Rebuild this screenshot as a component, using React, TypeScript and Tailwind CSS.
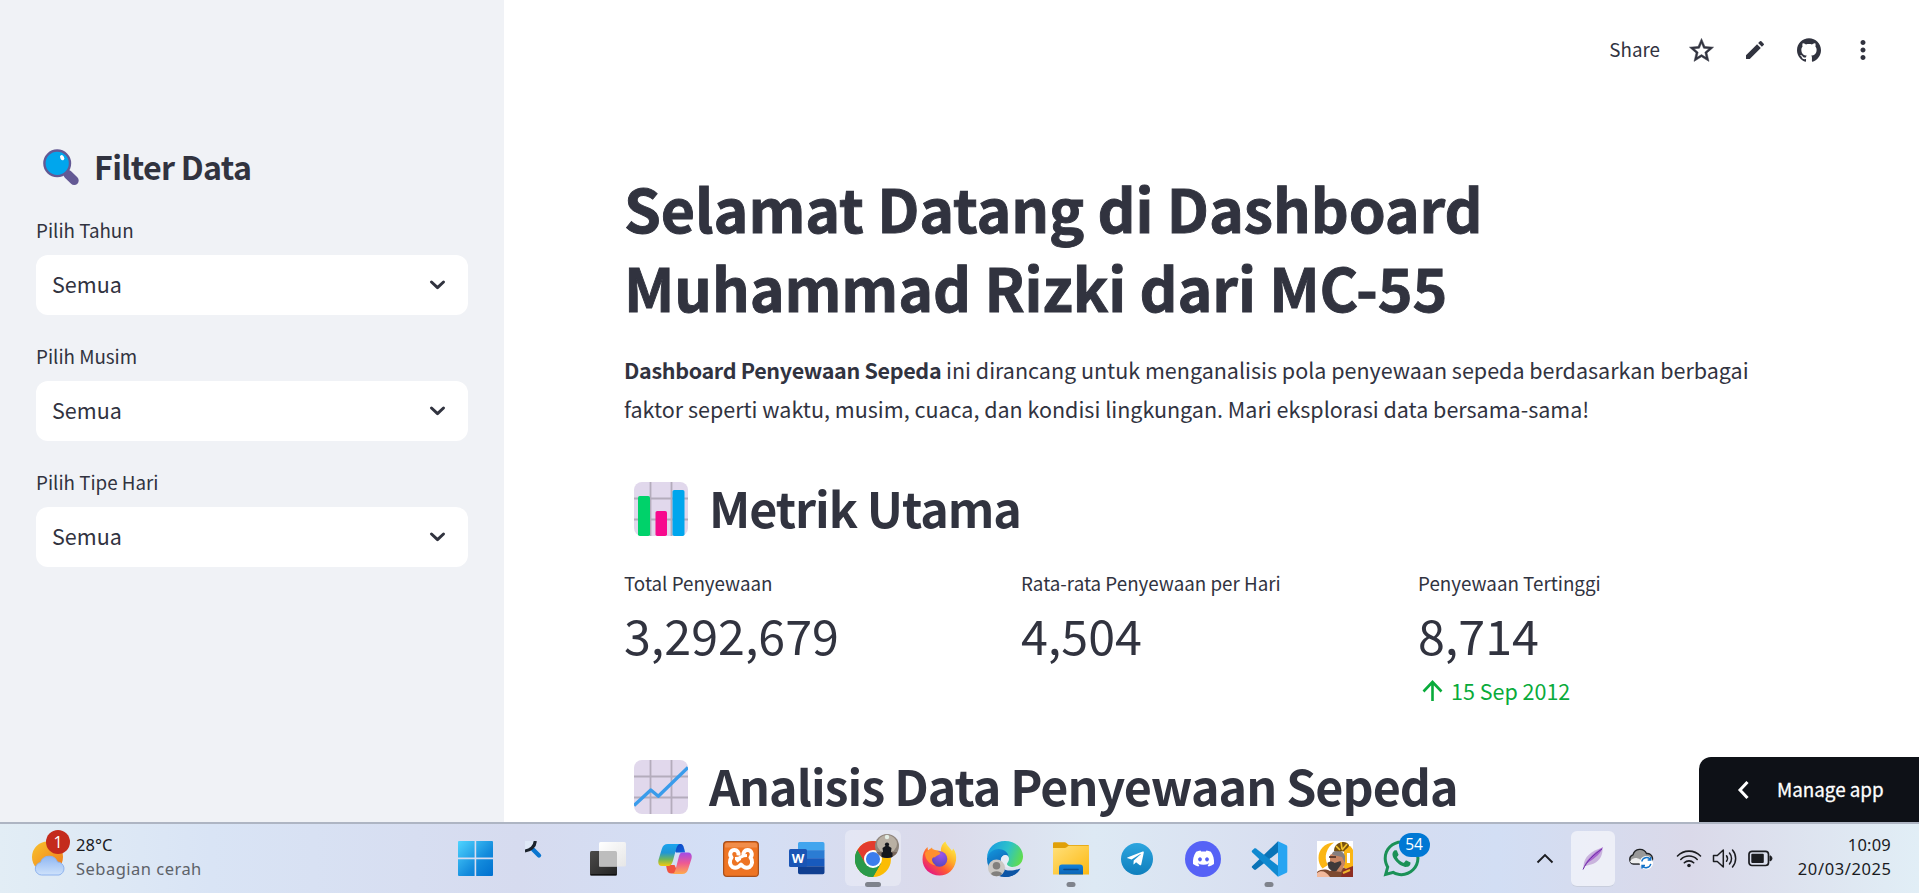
import React from "react";
import { MdStarOutline, MdEdit, MdMoreVert } from "react-icons/md";
import { SiGithub } from "react-icons/si";
import { FaDiscord, FaTelegramPlane, FaWhatsapp } from "react-icons/fa";

const SearchEmoji = () => (
  <svg width="36" height="37" viewBox="0 0 36 37">
    <path d="M25 25.500L31.200 31.500" stroke="#635994" strokeWidth="9" strokeLinecap="round" />
    <path d="M22 22l4 4" stroke="#635994" strokeWidth="3" />
    <circle cx="14.200" cy="14.300" r="12.800" fill="#00a6ed" stroke="#635994" strokeWidth="2.400" />
    <ellipse cx="19.200" cy="8.700" rx="1.900" ry="2.700" transform="rotate(-30 19.200 8.700)" fill="#fff" />
  </svg>
);

const Grid = () => (
  <>
    <rect width="54" height="54" rx="8" fill="#e1d8ec" />
    <path d="M16.500 0v54M37.500 0v54M0 16.500h54M0 37.500h54" stroke="#b4acbc" strokeWidth="1.800" />
  </>
);

const BarsEmoji = () => (
  <svg width="54" height="54" viewBox="0 0 54 54">
    <Grid />
    <rect x="4" y="14" width="12" height="40" rx="1.800" fill="#00d26a" />
    <rect x="21.500" y="29" width="11.500" height="25" rx="1.800" fill="#f70a8d" />
    <rect x="38.500" y="8" width="12" height="46" rx="1.800" fill="#00a6ed" />
  </svg>
);

const LineEmoji = () => (
  <svg width="54" height="54" viewBox="0 0 54 54">
    <Grid />
    <path d="M0 45.500L16.800 30l7.500 6.200L54 7.500" fill="none" stroke="#3a9ceb" strokeWidth="3.400" strokeLinejoin="round" />
  </svg>
);

const Select = ({ label }: { label: string }) => (
  <div>
    <div className="h-[32px] text-[18.8px] leading-[32px]">{label}</div>
    <div className="mt-[9px] flex h-[60px] items-center justify-between rounded-[12px] bg-white pr-[22.5px] pl-[16px]">
      <span className="pb-[3px] text-[21.5px] leading-[38px]">Semua</span>
      <svg width="17" height="12" viewBox="0 0 17 12">
        <path d="M2.500 3l6 5.600 6-5.600" fill="none" stroke="#31333f" strokeWidth="3" strokeLinecap="round" strokeLinejoin="round" />
      </svg>
    </div>
  </div>
);

const Metric = ({ label, value, delta }: { label: string; value: string; delta?: string }) => (
  <div className="w-[397px] whitespace-nowrap">
    <div className="h-[32px] text-[18.8px] leading-[32px]">{label}</div>
    <div className="h-[72px] text-[48.4px] leading-[70px]">{value}</div>
    <div className="mt-[1px] flex h-[38px] items-center text-[21.5px] leading-[38px] text-[#09ab3b]">
      {delta && (
        <>
          <svg width="28" height="28" viewBox="0 0 28 28" className="mr-[5px]">
            <path d="M14.500 24V5M5.500 14.500l9-9.500 9 9.500" fill="none" stroke="#09ab3b" strokeWidth="2.600" />
          </svg>
          {delta}
        </>
      )}
    </div>
  </div>
);

const WindowsIcon = () => (
  <svg width="35" height="35" viewBox="0 0 35 35">
    <defs>
      <linearGradient id="win" x1="0" y1="0" x2="35" y2="35" gradientUnits="userSpaceOnUse">
        <stop stopColor="#4fd4ff" /><stop offset=".6" stopColor="#138bdc" /><stop offset="1" stopColor="#0070cf" />
      </linearGradient>
    </defs>
    <path fill="url(#win)" d="M1 0h15.600v16.600H0V1a1 1 0 011-1zM18.200 0H34a1 1 0 011 1v15.600H18.200zM0 18.200h16.600V35H1a1 1 0 01-1-1zM18.200 18.200H35V34a1 1 0 01-1 1H18.200z" />
  </svg>
);

const SearchIcon = () => (
  <svg width="35" height="35" viewBox="0 0 35 35">
    <path d="M0 0h10.500C10 5 5 9 0 10z" fill="#dfe8f7" />
    <path d="M8 8.500l6 6" stroke="#0a76d0" strokeWidth="4.400" strokeLinecap="round" />
    <path d="M10.300 0C9.800 5.500 5.500 9.500 0 10" fill="none" stroke="#1b222b" strokeWidth="3.200" />
  </svg>
);

const TaskViewIcon = () => (
  <svg width="36" height="35" viewBox="0 0 36 35">
    <defs>
      <linearGradient id="tvd" x1="0" y1="0" x2="1" y2="1"><stop stopColor="#4c4b4a" /><stop offset="1" stopColor="#232323" /></linearGradient>
      <linearGradient id="tvl" x1="0" y1="0" x2="1" y2="1"><stop stopColor="#fff" /><stop offset="1" stopColor="#e6e6e6" /></linearGradient>
    </defs>
    <rect x="0" y="10" width="27" height="24.500" rx="1.500" fill="url(#tvd)" />
    <path d="M.5 33.800h26" stroke="#0b0b0b" strokeWidth="1.200" />
    <rect x="9" y="1" width="27" height="24.500" rx="1.500" fill="url(#tvl)" />
    <path d="M9 10h16.500a1.500 1.500 0 011.500 1.500v14H9z" fill="#bdbdbd" />
  </svg>
);

const CopilotIcon = () => (
  <svg width="34" height="32" viewBox="0 0 34 32">
    <defs>
      <linearGradient id="cp1" x1="0" y1="0" x2="0" y2="1"><stop stopColor="#1aa3ee" /><stop offset=".4" stopColor="#1f96d6" /><stop offset=".7" stopColor="#6fb65a" /><stop offset="1" stopColor="#f5c90c" /></linearGradient>
      <linearGradient id="cp2" x1="0" y1="0" x2="0" y2="1"><stop stopColor="#a24be8" /><stop offset=".5" stopColor="#ee5a92" /><stop offset="1" stopColor="#ffab4c" /></linearGradient>
      <linearGradient id="cp3" x1="0" y1="0" x2="1" y2="1"><stop stopColor="#0c3fbd" /><stop offset="1" stopColor="#1263dd" /></linearGradient>
    </defs>
    <path d="M17 1h5c3 0 3.500 2 4.300 5l.8 3.500h-9L13 3z" fill="url(#cp3)" />
    <path d="M8 22h8.500l4 8.500h-7c-3 0-4-1.500-4.600-4z" fill="#f0523f" />
    <path d="M10 1h13c-3 0-4 2-5 5.500l-3 11C14 21 13 23 9.500 23H4C.5 23-.3 20 .6 16.500L3.800 6C4.800 2.800 6.500 1 10 1z" fill="url(#cp1)" />
    <path d="M24.500 9.500H30c3.500 0 4.300 3 3.400 6.500L30.200 26c-1 3.200-2.700 5-6.200 5H13c3 0 3.800-2 4.700-5l2.800-11c.8-3.500 1.500-5.500 4-5.500z" fill="url(#cp2)" />
  </svg>
);

const XamppIcon = () => (
  <svg width="36" height="36" viewBox="0 0 36 36">
    <rect x=".6" y=".6" width="34.800" height="34.800" rx="3.500" fill="#ee7423" stroke="#a8501c" strokeWidth="1.200" />
    <path d="M2 4a2 2 0 012-2h28a2 2 0 012 2v2.500H2z" fill="#f4a36c" opacity=".55" />
    <path d="M15.500 14.500C16 11 14 9 11.500 9 7.500 9 6 13.500 8.500 16.500 6 19.500 6.500 24 9.500 26c3 1.600 6 .2 8.500-2.500 2.500 2.700 5.500 4.100 8.500 2.500 3-2 3.500-6.500 1-9.500 2.500-3 1-7.500-3-7.500-2.500 0-4.500 2-4 5.500" fill="none" stroke="#fff" strokeWidth="4" strokeLinejoin="round" />
    <path d="M12 17.500c2 0 4 0 6-1.500s4-1.500 6-1.500M13.500 20.500c1.500-1.500 3-3 4.500-3" fill="none" stroke="#fff" strokeWidth="3" />
  </svg>
);

const WordIcon = () => (
  <svg width="36" height="33" viewBox="0 0 36 33">
    <path d="M10.500 0h23.300A1.700 1.700 0 0135.500 1.700V8.500H9V1.700A1.700 1.700 0 0110.500 0z" fill="#41a5ee" />
    <path d="M9 8.200h26.500v8H9z" fill="#2b7cd3" />
    <path d="M9 16.200h26.500v8H9z" fill="#185abd" />
    <path d="M9 24.200h26.500v6.300a1.700 1.700 0 01-1.700 1.700H10.700A1.700 1.700 0 019 30.500z" fill="#103f91" />
    <rect x="0" y="7" width="18" height="18" rx="1.600" fill="#1a55b5" />
    <text x="9" y="20.600" textAnchor="middle" fontFamily="Open Sans" fontWeight="700" fontSize="13" fill="#fff">W</text>
  </svg>
);

const ChromeIcon = () => (
  <svg width="36" height="36" viewBox="0 0 48 48">
    <circle cx="24" cy="24" r="24" fill="#fbbc04" />
    <path d="M24 24L3.200 12A24 24 0 0144.800 12H24z" fill="#e33b2e" />
    <path d="M3.200 12a24 24 0 0020.800 36l10.400-18L24 24l-10.400 6z" fill="#2a9a4a" />
    <path d="M3.200 12L13.600 30 24 24V12z" fill="#e33b2e" />
    <path d="M3.200 12a24 24 0 0020.800 36l10.400-18A12 12 0 0113.600 30z" fill="#2a9a4a" />
    <circle cx="24" cy="24" r="12" fill="#fff" />
    <circle cx="24" cy="24" r="9.400" fill="#3b7ded" />
  </svg>
);

const AvatarBadge = () => (
  <svg width="24" height="24" viewBox="0 0 24 24">
    <defs><clipPath id="av"><circle cx="12" cy="12" r="12" /></clipPath></defs>
    <g clipPath="url(#av)">
      <rect width="24" height="24" fill="#8f857c" />
      <ellipse cx="12" cy="10" rx="10" ry="9" fill="#b9b0a4" />
      <rect y="18" width="24" height="6" fill="#77665c" />
      <circle cx="12" cy="3" r="2.200" fill="#e4efe6" />
      <circle cx="12" cy="10.500" r="2.100" fill="#15171d" />
      <path d="M10.500 12h3l3 2-.5 4 1.500 1v5h-11V19l1.500-1-.5-4z" fill="#15171d" />
    </g>
  </svg>
);

const FirefoxIcon = () => (
  <svg width="35" height="35" viewBox="0 0 35 35">
    <defs>
      <linearGradient id="ff" x1="30" y1="3" x2="6" y2="32" gradientUnits="userSpaceOnUse">
        <stop stopColor="#fff04a" /><stop offset=".35" stopColor="#ffb128" /><stop offset=".65" stopColor="#ff5a33" /><stop offset="1" stopColor="#e31587" />
      </linearGradient>
      <radialGradient id="ffp" cx=".6" cy=".2" r="1"><stop stopColor="#9d54ec" /><stop offset="1" stopColor="#4a45b5" /></radialGradient>
    </defs>
    <path d="M23.500.5c1 4 4 5.500 6.500 9.500l1.200-2.500C34 11 34.500 15 34 19.500 32.500 28.500 26 34.500 17.500 34.500 8 34.500.5 27.500.5 18.500c0-5 1.500-9.500 5-12.500L6 9.500l4-3 1 3c4.500-.5 7 .5 8 1C18.500 6 20.500 2.500 23.500.5z" fill="url(#ff)" />
    <circle cx="17.500" cy="18" r="7.800" fill="url(#ffp)" />
    <path d="M3 12c3-4 8-5 11.500-2.200 2 1.500 3.500 1.200 4 2.200-1 2.500-4.500 2.300-5.500 4.500-1.500-1-3 .5-3 2.500.2 2 1.500 4 4 5.500-6-.5-11-6-11-12.500z" fill="#ff8f2e" />
  </svg>
);

const EdgeIcon = () => (
  <svg width="37" height="36" viewBox="0 0 37 36">
    <defs>
      <linearGradient id="ed1" x1="2" y1="6" x2="36" y2="20" gradientUnits="userSpaceOnUse"><stop stopColor="#1a9fe0" /><stop offset=".5" stopColor="#2cc2c9" /><stop offset="1" stopColor="#66e03f" /></linearGradient>
      <linearGradient id="ed2" x1="0" y1="12" x2="12" y2="34" gradientUnits="userSpaceOnUse"><stop stopColor="#1391d8" /><stop offset="1" stopColor="#0c55a8" /></linearGradient>
    </defs>
    <path d="M0 17C0 7 8 0 18 0c11 0 18 7.500 18 15.500 0 6-4.500 10.500-10.500 10.500-4.500 0-6.500-1.500-6.500-3 0-1 2-2 2-5 0-3.500-3.500-7-9-7C6 11 2 13 0 17z" fill="url(#ed1)" />
    <path d="M0 17c2-6 7-9 11.500-9 6 0 10 4 10 8-3-3-8-2-8 4.500 0 8 8 14 19 8.500C29.500 33.500 24 36 18 36 8 36 0 28 0 18z" fill="url(#ed2)" />
    <path d="M14 18c-3 6 2 16 19.500 9.500C30 33.500 24 36 18 36 10 34 9 23 14 18z" fill="#0d55a5" />
    <path d="M14 19c0-3 2-5 4.500-5s3.500 1.800 3.500 4c0 2.500-2 3.500-2 5s2.500 3 6 3c-6 2-12-1-12-7z" fill="#e6ecf6" />
    <circle cx="9.500" cy="27" r="8.500" fill="#cbc8c4" />
    <circle cx="9.500" cy="24.700" r="3.800" fill="#82807d" />
    <path d="M4 33a5.700 3.800 0 0111 0c-3 3-8 3-11 0z" fill="#82807d" />
  </svg>
);

const ExplorerIcon = () => (
  <svg width="36" height="33" viewBox="0 0 36 33">
    <defs>
      <linearGradient id="fo" x1="0" y1="0" x2="1" y2="1"><stop stopColor="#ffe07a" /><stop offset="1" stopColor="#fdb912" /></linearGradient>
      <linearGradient id="fb" x1="0" y1="0" x2="0" y2="1"><stop stopColor="#1481da" /><stop offset="1" stopColor="#0a64b4" /></linearGradient>
    </defs>
    <path d="M0 1.500A1.200 1.200 0 011.200.300H12c1.500 0 2.500 2.700 4 2.700h19a1 1 0 011 1V8H0z" fill="#e0a008" />
    <path d="M0 6h12c2 0 2.500-2.200 4.500-2.200H36V32.500H0z" fill="url(#fo)" />
    <path d="M6 32.500V25.500a3 3 0 013-3h18a3 3 0 013 3v7z" fill="url(#fb)" />
    <path d="M11 27.500h14" stroke="#0a4a8c" strokeWidth="1.600" strokeLinecap="round" />
  </svg>
);

const VsCodeIcon = () => (
  <svg width="37" height="36" viewBox="0 0 37 36">
    <path d="M27 .3L6 20.500 1.500 24.800c-.9.800-.9 1.300-.3 2l1.800 1.700c.7.600 1.300.600 2 .1L27.500 11z" fill="#0a73b7" />
    <path d="M27 35.700L1.300 11.500c-.8-.8-.8-1.400-.2-2L3 7.700c.7-.6 1.300-.6 2-.1L27.500 25z" fill="#1089d0" />
    <path d="M27 .3l8 3.600c.8.400 1.300 1 1.300 1.900v24.400c0 .9-.5 1.500-1.300 1.900l-8 3.600z" fill="#27a5f2" />
  </svg>
);

const GameIcon = () => (
  <svg width="36" height="36" viewBox="0 0 36 36">
    <rect width="36" height="36" fill="#fff" />
    <path d="M17 1.500C7 2 1.500 9 1.500 17c0 4 1.500 7.500 4 10.500L11 24C6 16 10 6 17 1.500z" fill="#fbb615" />
    <path d="M27 3c5 1 8 3 9 6v20l-9-2z" fill="#fbb615" />
    <path d="M30 12h3v10h-3z" fill="#fff" />
    <path d="M0 36v-5c4-3 9-3 13-1l10-5 9 4 4 2v5z" fill="#7d4a30" />
    <path d="M0 36v-4c4-3 9-2 13 4z" fill="#f2b99c" />
    <path d="M13 14l5-3 9 3 1 9-4 8-7-1-4-6z" fill="#c98663" />
    <path d="M15 13c1-5 11-5 13 2v7l-3-6-9-2z" fill="#857f80" />
    <path d="M17 10c0-3 1-6 4-7.500C24 .5 30 0 32 4c0 3-4 4-5 6.500z" fill="#77500f" />
    <path d="M19 5l4 4M24 1l1 7M30 3l-5 6" stroke="#f5c42b" strokeWidth="1.700" />
    <path d="M10.500 22c2-2 5-2 7 0l6-2 1 3-5 7c-4 1-6-1-8-3z" fill="#3f3a3a" />
    <path d="M12 16h7" stroke="#4a2c22" strokeWidth="1.600" />
    <path d="M26 29l10-4v11H24z" fill="#8e2d22" />
    <path d="M26 32l7-3" stroke="#efb52c" strokeWidth="2" />
  </svg>
);

const WeatherIcon = () => (
  <svg width="35" height="37" viewBox="0 0 35 37">
    <defs>
      <linearGradient id="sun" x1="0" y1="0" x2="1" y2="1"><stop stopColor="#f8c42e" /><stop offset="1" stopColor="#f0761a" /></linearGradient>
      <linearGradient id="cl" x1="0" y1="0" x2="0" y2="1"><stop stopColor="#8fb7f3" /><stop offset="1" stopColor="#cfe2fb" /></linearGradient>
    </defs>
    <circle cx="15.500" cy="17" r="15.500" fill="url(#sun)" />
    <path d="M9.500 35A6.300 6.300 0 018.500 22.500 9 9 0 0125.500 22 6.600 6.600 0 0127 35z" fill="url(#cl)" stroke="#8db2ee" strokeWidth="1" />
  </svg>
);

const FeatherIcon = () => (
  <svg width="22" height="25" viewBox="0 0 22 25">
    <path d="M1.500 20C2 11 9 5 20.500 1.500 21 9 18 14.500 12 17.500c-4 1.500-8 1.500-10.500 4z" fill="#c9b4dd" />
    <path d="M.8 24C3 15 10 8 21 1c-2 6.500-8 11-13.500 14.500C4.500 17.500 2 20.500.8 24z" fill="#a765cf" />
    <path d="M1 23.500C5 15 11 9 20 3" stroke="#6f2fa8" strokeWidth="1" fill="none" />
  </svg>
);

const CloudIcon = () => (
  <svg width="26" height="22" viewBox="0 0 26 22">
    <path d="M5.500 16A4.800 4.800 0 015 6.800 7.200 7.200 0 0118.500 5.500 5.300 5.300 0 0120 16z" fill="#999" stroke="#202225" strokeWidth="1.400" />
    <path d="M2 13.500C5 9 9 9.500 12 11.500V15.300H5.500C4 15.300 2.500 14.800 2 13.500z" fill="#eee" />
    <circle cx="18.300" cy="14.700" r="6.800" fill="#fff" />
    <path d="M13.700 13.500a5 5 0 018.800-2M22.800 15.800a5 5 0 01-8.600 2.200M22.700 9v3h-3M14 20.500v-3h3" fill="none" stroke="#1272c8" strokeWidth="1.400" />
  </svg>
);

const WifiIcon = () => (
  <svg width="26" height="19" viewBox="0 0 26 19" fill="none" stroke="#1b1c20" strokeWidth="1.600" strokeLinecap="round">
    <path d="M1.500 7a16 16 0 0123 0M4.800 10.500a11.500 11.500 0 0116.400 0M8.300 13.800a6.700 6.700 0 019.400 0" />
    <circle cx="13" cy="16.500" r="1.800" fill="#1b1c20" stroke="none" />
  </svg>
);

const SpeakerIcon = () => (
  <svg width="26" height="21" viewBox="0 0 26 21" fill="none" stroke="#1b1c20" strokeWidth="1.500" strokeLinecap="round" strokeLinejoin="round">
    <path d="M1.500 7.500h3.800L11.300 2v17l-6-5.500H1.500z" />
    <path d="M14.500 7.800a4.500 4.500 0 010 5.400M17.500 5a8.500 8.500 0 010 11M20.500 2a13 13 0 010 17" />
  </svg>
);

const BatteryIcon = () => (
  <svg width="25" height="17" viewBox="0 0 25 17">
    <rect x="1" y="1.300" width="19.500" height="14.200" rx="3" fill="none" stroke="#1b1c20" strokeWidth="1.700" />
    <rect x="3.300" y="3.700" width="12.500" height="9.400" rx="1" fill="#1b1c20" />
    <path d="M22 5.800a2.700 2.700 0 010 5.200z" fill="#1b1c20" stroke="#1b1c20" />
  </svg>
);

const Slot = ({ children, active, dot }: { children: React.ReactNode; active?: boolean; dot?: string }) => (
  <div className="relative flex h-[69px] w-[66px] shrink-0 items-center justify-center">
    {active && <div className="absolute top-[6px] left-[5px] h-[56px] w-[56px] rounded-[6px] bg-white/30" />}
    <div className="relative">{children}</div>
    {dot && <div className={"absolute bottom-[6px] left-1/2 h-[5px] -translate-x-1/2 rounded-full bg-[#7f838c] " + dot} />}
  </div>
);

const Taskbar = () => (
  <footer className="flex h-[71px] shrink-0 items-center border-t-2 border-[#aeb5c3] bg-[linear-gradient(90deg,#e2edf5_0%,#d9e4f5_11%,#d6dbef_27%,#d3dff6_38%,#dbdaea_49%,#dde9f4_57%,#d7dcef_69%,#d2def4_78%,#dad9e9_88%,#e1eef6_100%)] font-['Noto_Sans',sans-serif] whitespace-nowrap text-[#1a1b1e]">
    <div className="flex w-[442px] items-center pl-[32px]">
      <div className="relative">
        <WeatherIcon />
        <span className="absolute -top-[10px] left-[14px] flex h-[24px] w-[24px] items-center justify-center rounded-full bg-[#c42b1c] font-['Open_Sans'] text-[16px] leading-none text-white">1</span>
      </div>
      <div className="mb-[3px] ml-[9px] text-[16.5px] leading-[24px]">
        <div>28°C</div>
        <div className="tracking-[0.48px] text-[#5d6269]">Sebagian cerah</div>
      </div>
    </div>
    <div className="flex">
      <Slot><WindowsIcon /></Slot>
      <div className="ml-[1px] flex">
        <Slot><SearchIcon /></Slot>
        <Slot><TaskViewIcon /></Slot>
      </div>
      <div className="ml-[1px] flex">
        <Slot><CopilotIcon /></Slot>
        <Slot><XamppIcon /></Slot>
        <Slot><WordIcon /></Slot>
        <Slot active dot="w-[16px]">
          <ChromeIcon />
          <div className="absolute -top-[7px] left-[20px]"><AvatarBadge /></div>
        </Slot>
        <Slot><FirefoxIcon /></Slot>
        <Slot><EdgeIcon /></Slot>
        <Slot dot="w-[9px]"><ExplorerIcon /></Slot>
        <Slot>
          <div className="flex h-[32px] w-[32px] items-center justify-center rounded-full bg-gradient-to-b from-[#2ca5df] to-[#0f7fbd] text-white"><FaTelegramPlane size={19} className="mr-[3px]" /></div>
        </Slot>
        <Slot>
          <div className="flex h-[36px] w-[36px] items-center justify-center rounded-full bg-[#5662f6] text-white"><FaDiscord size={23} /></div>
        </Slot>
        <Slot dot="w-[9px]"><VsCodeIcon /></Slot>
        <Slot><GameIcon /></Slot>
        <Slot>
          <FaWhatsapp size={41} color="#1b9157" />
          <span className="absolute -top-[5px] left-[18px] flex h-[24px] w-[31px] items-center justify-center rounded-full bg-[#0078d4] font-['Open_Sans'] text-[15.5px] leading-none text-white">54</span>
        </Slot>
      </div>
    </div>
    <div className="ml-auto flex items-center pr-[28px]">
      <svg width="18" height="11" viewBox="0 0 18 11"><path d="M1.500 9.500L9 2l7.500 7.500" fill="none" stroke="#1b1c20" strokeWidth="1.900" /></svg>
      <div className="mr-[13px] ml-[17px] flex h-[56px] w-[44px] items-center justify-center rounded-[6px] border-b border-[#c9cedd] bg-white/55"><FeatherIcon /></div>
      <CloudIcon />
      <div className="ml-[22px] flex items-center gap-[10px]">
        <WifiIcon /><SpeakerIcon /><BatteryIcon />
      </div>
      <div className="mb-[3px] ml-[24px] w-[94px] text-right text-[16.5px] leading-[24px]">
        <div className="tracking-[0.2px]">10:09</div>
        <div className="-mx-[5px] tracking-[0.6px]"><span className="mr-[4.4px]">20/03/2025</span></div>
      </div>
    </div>
  </footer>
);

export default function App() {
  return (
    <div className="flex h-[893px] w-[1919px] flex-col overflow-hidden bg-white font-['Noto_Sans_CJK_SC',sans-serif] text-[#31333f]">
      <div className="flex h-[822px] shrink-0 overflow-hidden">
        <aside className="w-[504px] shrink-0 bg-[#f0f2f6] px-[36px] pt-[144px]">
          <h2 className="flex h-[44px] items-center text-[32.2px] leading-[44px] font-semibold tracking-[-0.7px] whitespace-nowrap">
            <span className="mt-[2px] mr-[15px] ml-[7px]"><SearchEmoji /></span>
            Filter Data
          </h2>
          <div className="mt-[26px] flex flex-col gap-[25px]">
            <Select label="Pilih Tahun" />
            <Select label="Pilih Musim" />
            <Select label="Pilih Tipe Hari" />
          </div>
        </aside>
        <main className="relative grow overflow-hidden pt-[168px] pl-[120px] whitespace-nowrap">
          <div className="absolute top-[34px] right-[41px] flex h-[32px] items-center">
            <span className="mr-[27px] pb-[2px] text-[18.8px] leading-[32px]">Share</span>
            <MdStarOutline size={29} stroke="#31333f" strokeWidth={0.4} />
            <MdEdit size={24} className="ml-[27px]" />
            <SiGithub size={24} className="ml-[30px]" />
            <MdMoreVert size={30} className="ml-[27px]" />
          </div>
          <h1 className="text-[59.1px] leading-[79.2px] font-bold tracking-[-0.08px] [-webkit-text-stroke:0.9px_#31333f]">
            Selamat Datang di Dashboard<br />Muhammad Rizki dari MC-55
          </h1>
          <p className="mt-[25px] text-[21.5px] leading-[38.7px]">
            <b className="font-semibold tracking-[-0.33px]">Dashboard Penyewaan Sepeda</b> ini dirancang untuk menganalisis pola penyewaan sepeda berdasarkan berbagai<br />
            faktor seperti waktu, musim, cuaca, dan kondisi lingkungan. Mari eksplorasi data bersama-sama!
          </p>
          <h2 className="mt-[46px] flex h-[65px] items-center text-[48.4px] leading-[65px] font-semibold tracking-[-1.05px]">
            <span className="mt-[4px] mr-[21px] ml-[10px]"><BarsEmoji /></span>Metrik Utama
          </h2>
          <div className="mt-[27px] flex">
            <Metric label="Total Penyewaan" value="3,292,679" />
            <Metric label="Rata-rata Penyewaan per Hari" value="4,504" />
            <Metric label="Penyewaan Tertinggi" value="8,714" delta="15 Sep 2012" />
          </div>
          <h2 className="mt-[43px] flex h-[65px] items-center text-[48.4px] leading-[65px] font-semibold tracking-[-1px]">
            <span className="mt-[4px] mr-[21px] ml-[10px]"><LineEmoji /></span>Analisis Data Penyewaan Sepeda
          </h2>
          <div className="absolute right-0 bottom-0 flex h-[65px] w-[220px] items-center rounded-tl-[12px] bg-[#0e1117] pl-[38px] text-white">
            <svg width="13" height="20" viewBox="0 0 13 20"><path d="M10.500 2L3 10l7.500 8" fill="none" stroke="#fff" strokeWidth="3" /></svg>
            <span className="ml-[27px] pb-[1px] text-[18.8px] leading-[32px] [-webkit-text-stroke:0.3px_#fff]">Manage app</span>
          </div>
        </main>
      </div>
      <Taskbar />
    </div>
  );
}
